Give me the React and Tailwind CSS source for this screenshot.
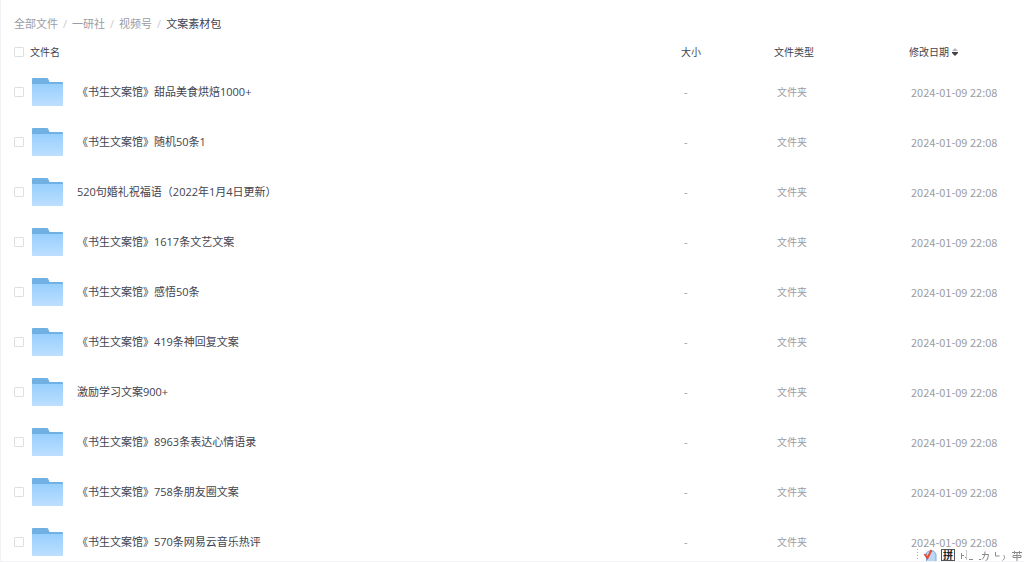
const breadcrumbs = ["全部文件", "一研社", "视频号"];

const files = [
  "《书生文案馆》甜品美食烘焙1000+",
  "《书生文案馆》随机50条1",
  "520句婚礼祝福语（2022年1月4日更新）",
  "《书生文案馆》1617条文艺文案",
  "《书生文案馆》感悟50条",
  "《书生文案馆》419条神回复文案",
  "激励学习文案900+",
  "《书生文案馆》8963条表达心情语录",
  "《书生文案馆》758条朋友圈文案",
  "《书生文案馆》570条网易云音乐热评",
];

const FolderIcon = () => (
  <svg width="32" height="28" viewBox="0 0 32 28" className="shrink-0" aria-hidden="true">
    <defs>
      <linearGradient id="folder" x1="0" y1="0" x2="0" y2="1">
        <stop offset="0" stopColor="#97cffd" />
        <stop offset="1" stopColor="#bddfff" />
      </linearGradient>
    </defs>
    <path d="M0 1a1 1 0 0 1 1-1h13.500c1 0 1.500.4 1.900 1.200L17.500 4H30a1 1 0 0 1 1 1v4H0z" fill="#70b0e2" />
    <path d="M0 6h31v21a1 1 0 0 1-1 1H1a1 1 0 0 1-1-1z" fill="url(#folder)" />
  </svg>
);

const SortIcon = () => (
  <svg width="6" height="8" viewBox="0 0 6 8" aria-hidden="true">
    <path d="M3 0l3 3H0z" fill="#b5b6ba" />
    <path d="M0 4h6v1L3 8 0 5z" fill="#404248" />
  </svg>
);

const CheckBox = ({ label }) => (
  <input
    type="checkbox"
    aria-label={label}
    className="block size-2.5 appearance-none rounded-[1px] border border-[#dedfe3] bg-white"
  />
);

const InputBar = () => (
  <div className="absolute right-0 bottom-0 flex items-start">
    <svg width="25" height="12" viewBox="0 0 25 12" aria-hidden="true">
      <path d="M1.500 0v12" stroke="#aaa" strokeDasharray="1 2" />
      <path d="M10.500 4l2-2h5l2.500 3v8h-9.500z" fill="#b9d8f5" stroke="#7fa6d2" />
      <path d="M8.500 5l3 4 4-8" fill="none" stroke="#e94b35" strokeWidth="2" />
    </svg>
    <button
      type="button"
      className="flex h-3 w-3.5 shrink-0 items-center justify-center border border-[#555] bg-white text-[10px] leading-[10px] font-bold text-[#222]"
    >
      拼
    </button>
    <svg width="69" height="12" viewBox="0 0 69 12" fill="none" stroke="#8a8a8a" aria-hidden="true">
      <path d="M6.500 4v6M7 6.500h2M10 8.500h2" />
      <path d="M11.500 1v10" stroke="#ccc" />
      <path d="M14 10.500h4" />
      <path d="M24 10.500h2M27 5.500h6.500l-1 5-2 1M30 2.500c0 4-1 6-3 8" />
      <path d="M40.500 3v4h4M48.500 6c2 2 1 4-1 5.500" />
      <path d="M57 3.500h10M59.500 2v3M64.500 2v3M58 6.500h8v2h-8zM62 3v9" />
    </svg>
  </div>
);

const App = () => {
  return (
    <main className="relative h-screen overflow-hidden border-b border-l border-[#f2f2f4] bg-white pl-[13px] font-['Open_Sans','Noto_Sans_CJK_SC',sans-serif] text-[11px] leading-4 text-[#41434f]">
      <nav aria-label="路径" className="flex h-10 items-center gap-[5px] pt-2 text-[#9a9ca3]">
        {breadcrumbs.map((name) => (
          <span key={name} className="flex items-center gap-[5px]">
            <a href="#">{name}</a>
            <span className="text-[#c8cad0]">/</span>
          </span>
        ))}
        <span className="text-[#41434f]">文案素材包</span>
      </nav>

      <table className="w-full table-fixed border-collapse text-left">
        <colgroup>
          <col className="w-4" />
          <col />
          <col className="w-[93px]" />
          <col className="w-[135px]" />
          <col className="w-[115px]" />
        </colgroup>
        <thead className="text-[10px]">
          <tr className="h-[27px] align-top">
            <th className="pt-[7px] pr-0 pb-0 pl-0">
              <CheckBox label="全选" />
            </th>
            <th className="pt-1 pr-0 pb-0 pl-0 font-normal">文件名</th>
            <th className="pt-1 pr-0 pb-0 pl-0 font-normal">大小</th>
            <th className="pt-1 pr-0 pb-0 pl-0 font-normal">文件类型</th>
            <th className="pt-1 pr-0 pb-0 pl-0 font-normal">
              <button type="button" className="flex items-center gap-[3px]">
                修改日期
                <SortIcon />
              </button>
            </th>
          </tr>
        </thead>
        <tbody>
          {files.map((name) => (
            <tr key={name} className="h-[50px] text-[#9a9ca3]">
              <td className="p-0">
                <CheckBox label={name} />
              </td>
              <td className="py-0 pr-0 pl-0.5">
                <div className="flex items-center gap-[13px]">
                  <FolderIcon />
                  <a href="#" className="truncate text-[#41434f]">
                    {name}
                  </a>
                </div>
              </td>
              <td className="py-0 pr-0 pl-[3px]">-</td>
              <td className="py-0 pr-0 pl-[3px] text-[10px]">文件夹</td>
              <td className="py-0 pr-0 pl-0.5 font-['Noto_Sans_CJK_SC',sans-serif] whitespace-nowrap">
                2024-01-09 22:08
              </td>
            </tr>
          ))}
        </tbody>
      </table>

      <InputBar />
    </main>
  );
};

export default App;
